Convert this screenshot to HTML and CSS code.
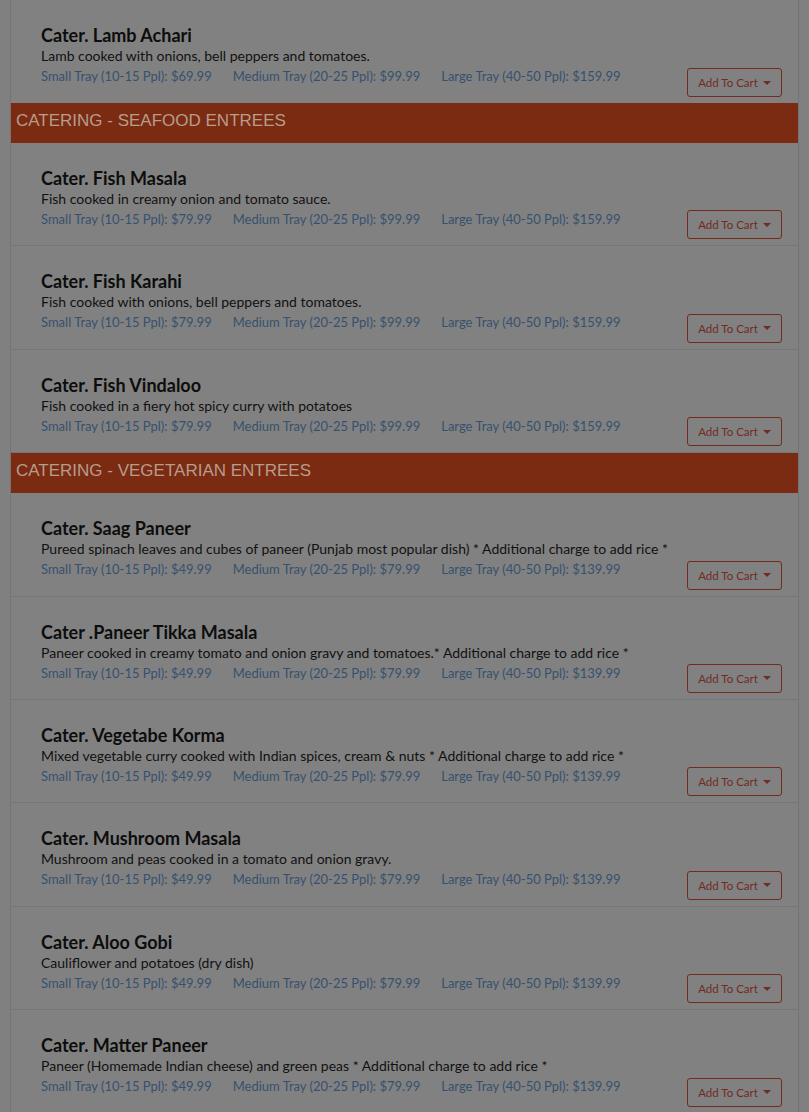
FILE: index.html
```html
<!DOCTYPE html>
<html>
<head>
<meta charset="utf-8">
<link rel="stylesheet" href="styles.css">
</head>
<body>
<div class="page">
  <div class="menu">
    <div class="item">
      <div class="info">
        <div class="name">Cater. Lamb Achari</div>
        <div class="desc">Lamb cooked with onions, bell peppers and tomatoes.</div>
        <div class="prices"><span>Small Tray (10-15 Ppl): $69.99</span><span>Medium Tray (20-25 Ppl): $99.99</span><span>Large Tray (40-50 Ppl): $159.99</span></div>
      </div>
      <button class="cart">Add To Cart <span class="caret"></span></button>
    </div>
    <div class="cat">CATERING - SEAFOOD ENTREES</div>
    <div class="item">
      <div class="info">
        <div class="name">Cater. Fish Masala</div>
        <div class="desc">Fish cooked in creamy onion and tomato sauce.</div>
        <div class="prices"><span>Small Tray (10-15 Ppl): $79.99</span><span>Medium Tray (20-25 Ppl): $99.99</span><span>Large Tray (40-50 Ppl): $159.99</span></div>
      </div>
      <button class="cart">Add To Cart <span class="caret"></span></button>
    </div>
    <div class="item">
      <div class="info">
        <div class="name">Cater. Fish Karahi</div>
        <div class="desc">Fish cooked with onions, bell peppers and tomatoes.</div>
        <div class="prices"><span>Small Tray (10-15 Ppl): $79.99</span><span>Medium Tray (20-25 Ppl): $99.99</span><span>Large Tray (40-50 Ppl): $159.99</span></div>
      </div>
      <button class="cart">Add To Cart <span class="caret"></span></button>
    </div>
    <div class="item">
      <div class="info">
        <div class="name">Cater. Fish Vindaloo</div>
        <div class="desc">Fish cooked in a fiery hot spicy curry with potatoes</div>
        <div class="prices"><span>Small Tray (10-15 Ppl): $79.99</span><span>Medium Tray (20-25 Ppl): $99.99</span><span>Large Tray (40-50 Ppl): $159.99</span></div>
      </div>
      <button class="cart">Add To Cart <span class="caret"></span></button>
    </div>
    <div class="cat">CATERING - VEGETARIAN ENTREES</div>
    <div class="item">
      <div class="info">
        <div class="name">Cater. Saag Paneer</div>
        <div class="desc">Pureed spinach leaves and cubes of paneer (Punjab most popular dish) * Additional charge to add rice *</div>
        <div class="prices"><span>Small Tray (10-15 Ppl): $49.99</span><span>Medium Tray (20-25 Ppl): $79.99</span><span>Large Tray (40-50 Ppl): $139.99</span></div>
      </div>
      <button class="cart">Add To Cart <span class="caret"></span></button>
    </div>
    <div class="item">
      <div class="info">
        <div class="name">Cater .Paneer Tikka Masala</div>
        <div class="desc">Paneer cooked in creamy tomato and onion gravy and tomatoes.* Additional charge to add rice *</div>
        <div class="prices"><span>Small Tray (10-15 Ppl): $49.99</span><span>Medium Tray (20-25 Ppl): $79.99</span><span>Large Tray (40-50 Ppl): $139.99</span></div>
      </div>
      <button class="cart">Add To Cart <span class="caret"></span></button>
    </div>
    <div class="item">
      <div class="info">
        <div class="name">Cater. Vegetabe Korma</div>
        <div class="desc">Mixed vegetable curry cooked with Indian spices, cream &amp; nuts * Additional charge to add rice *</div>
        <div class="prices"><span>Small Tray (10-15 Ppl): $49.99</span><span>Medium Tray (20-25 Ppl): $79.99</span><span>Large Tray (40-50 Ppl): $139.99</span></div>
      </div>
      <button class="cart">Add To Cart <span class="caret"></span></button>
    </div>
    <div class="item">
      <div class="info">
        <div class="name">Cater. Mushroom Masala</div>
        <div class="desc">Mushroom and peas cooked in a tomato and onion gravy.</div>
        <div class="prices"><span>Small Tray (10-15 Ppl): $49.99</span><span>Medium Tray (20-25 Ppl): $79.99</span><span>Large Tray (40-50 Ppl): $139.99</span></div>
      </div>
      <button class="cart">Add To Cart <span class="caret"></span></button>
    </div>
    <div class="item">
      <div class="info">
        <div class="name">Cater. Aloo Gobi</div>
        <div class="desc">Cauliflower and potatoes (dry dish)</div>
        <div class="prices"><span>Small Tray (10-15 Ppl): $49.99</span><span>Medium Tray (20-25 Ppl): $79.99</span><span>Large Tray (40-50 Ppl): $139.99</span></div>
      </div>
      <button class="cart">Add To Cart <span class="caret"></span></button>
    </div>
    <div class="item">
      <div class="info">
        <div class="name">Cater. Matter Paneer</div>
        <div class="desc">Paneer (Homemade Indian cheese) and green peas * Additional charge to add rice *</div>
        <div class="prices"><span>Small Tray (10-15 Ppl): $49.99</span><span>Medium Tray (20-25 Ppl): $79.99</span><span>Large Tray (40-50 Ppl): $139.99</span></div>
      </div>
      <button class="cart">Add To Cart <span class="caret"></span></button>
    </div>
  </div>
</div>
</body>
</html>
```
FILE: styles.css
```css
html, body {
  margin: 0;
  padding: 0;
  background: #808080;
  height: 1112px;
  overflow: hidden;
}
.page {
  padding: 0 10px;
}
.menu {
  border-left: 1px solid #747474;
  border-right: 1px solid #747474;
  background: #818181;
  font-family: Lato, "Liberation Sans", sans-serif;
  color: #111;
}
.item {
  display: flex;
  align-items: flex-end;
  justify-content: space-between;
  height: 102.4px;
  padding: 0 16px 0 30px;
  border-bottom: 1px solid #767676;
}
.item:first-child {
  height: 103px;
  border-bottom: 0;
}
.info {
  padding-top: 25px;
  align-self: flex-start;
}
.name {
  font-size: 18px;
  font-weight: 700;
  line-height: 20px;
  color: #0d0d0d;
}
.desc {
  font-size: 14px;
  line-height: 21px;
  color: #111;
}
.prices {
  display: flex;
  gap: 21px;
  font-size: 13px;
  line-height: 21px;
  color: #36516e;
}
.cart {
  margin-bottom: 6px;
  width: 95px;
  height: 29px;
  padding: 0;
  border: 1px solid #742b1c;
  border-radius: 3px;
  background: transparent;
  font-family: Lato, "Liberation Sans", sans-serif;
  font-size: 11.5px;
  color: #702c22;
  display: flex;
  align-items: center;
  justify-content: center;
  gap: 5px;
}
.caret {
  width: 0;
  height: 0;
  border-left: 4px solid transparent;
  border-right: 4px solid transparent;
  border-top: 4px solid #702c22;
}
.cat {
  height: 40px;
  background: #7a2b12;
  color: #b89c8c;
  font-family: "Liberation Sans", Arial, sans-serif;
  font-size: 17px;
  line-height: 36px;
  padding-left: 5px;
}
```
